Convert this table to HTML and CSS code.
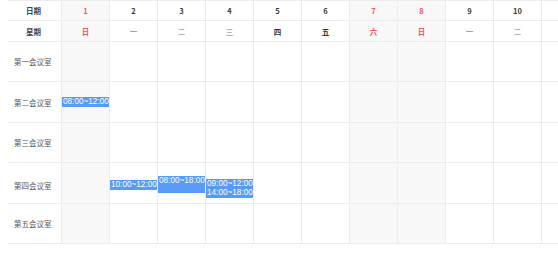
FILE: index.html
```html
<!DOCTYPE html>
<html lang="zh">
<head>
<meta charset="utf-8">
<link rel="stylesheet" href="styles.css">
</head>
<body>
<div class="sched">
  <div class="row head">
    <div class="lab c">日期</div>
    <div class="we red">1</div><div>2</div><div>3</div><div>4</div><div>5</div><div>6</div><div class="we red">7</div><div class="we red">8</div><div>9</div><div>10</div><div></div>
  </div>
  <div class="row head h2">
    <div class="lab c">星期</div>
    <div class="we red">日</div><div class="lt">一</div><div class="lt">二</div><div class="lt">三</div><div>四</div><div>五</div><div class="we red">六</div><div class="we red">日</div><div class="lt">一</div><div class="lt">二</div><div></div>
  </div>
  <div class="row room">
    <div class="lab">第一会议室</div>
    <div class="we"></div><div></div><div></div><div></div><div></div><div></div><div class="we"></div><div class="we"></div><div></div><div></div><div></div>
  </div>
  <div class="row room">
    <div class="lab">第二会议室</div>
    <div class="we"><span class="bk">08:00~12:00</span></div><div></div><div></div><div></div><div></div><div></div><div class="we"></div><div class="we"></div><div></div><div></div><div></div>
  </div>
  <div class="row room">
    <div class="lab">第三会议室</div>
    <div class="we"></div><div></div><div></div><div></div><div></div><div></div><div class="we"></div><div class="we"></div><div></div><div></div><div></div>
  </div>
  <div class="row room r4">
    <div class="lab">第四会议室</div>
    <div class="we"></div><div><span class="bk b1">10:00~12:00</span></div><div><span class="bk b2">08:00~18:00</span></div><div><span class="bk b3">09:00~12:00<br>14:00~18:00</span></div><div></div><div></div><div class="we"></div><div class="we"></div><div></div><div></div><div></div>
  </div>
  <div class="row room">
    <div class="lab">第五会议室</div>
    <div class="we"></div><div></div><div></div><div></div><div></div><div></div><div class="we"></div><div class="we"></div><div></div><div></div><div></div>
  </div>
</div>
</body>
</html>
```
FILE: styles.css
```css
html, body {
  margin: 0;
  padding: 0;
  background: #fff;
  overflow: hidden;
}
body {
  padding-left: 8px;
  font-family: "Noto Sans CJK SC", "Noto Sans", sans-serif;
  font-size: 7.5px;
  color: #555;
}
.sched {
  display: flex;
  flex-direction: column;
  width: max-content;
  border-top: 1px solid #ececec;
}
.row {
  display: grid;
  grid-template-columns: 54px repeat(11, 48px);
}
.row > div {
  border-right: 1px solid #ececec;
  border-bottom: 1px solid #ececec;
  display: flex;
  align-items: center;
  justify-content: center;
  overflow: hidden;
}
.head { height: 20px; font-weight: 700; color: #3a3a3a; }
.head.h2 { height: 21px; }
.head .lt { color: #777; font-weight: 400; }
.room { height: 40.4px; }
.row > .lab { justify-content: flex-start; padding-left: 6px; }
.row > .lab.c { justify-content: center; padding-left: 0; padding-right: 2px; }
.head .lab { color: #444; }
.row > .we { background: #f8f8f8; }
.red { color: #f55a5e; }
.head .red { font-weight: 700; }
.room > div { justify-content: flex-start; }
.bk {
  display: block;
  width: 100%;
  background: #5a9af7;
  color: #fff;
  font-family: "Liberation Sans", Arial, sans-serif;
  font-size: 8.2px;
  line-height: 9.5px;
  white-space: nowrap;
  overflow: hidden;
  padding-left: 1px;
  box-sizing: border-box;
}
.r4 > div { padding-top: 5px; box-sizing: border-box; }
.b1 { line-height: 10px; }
.b2 { line-height: 10px; padding-bottom: 7px; margin-top: -1px; }
.b3 { line-height: 9.5px; margin-top: 6px; }
```
